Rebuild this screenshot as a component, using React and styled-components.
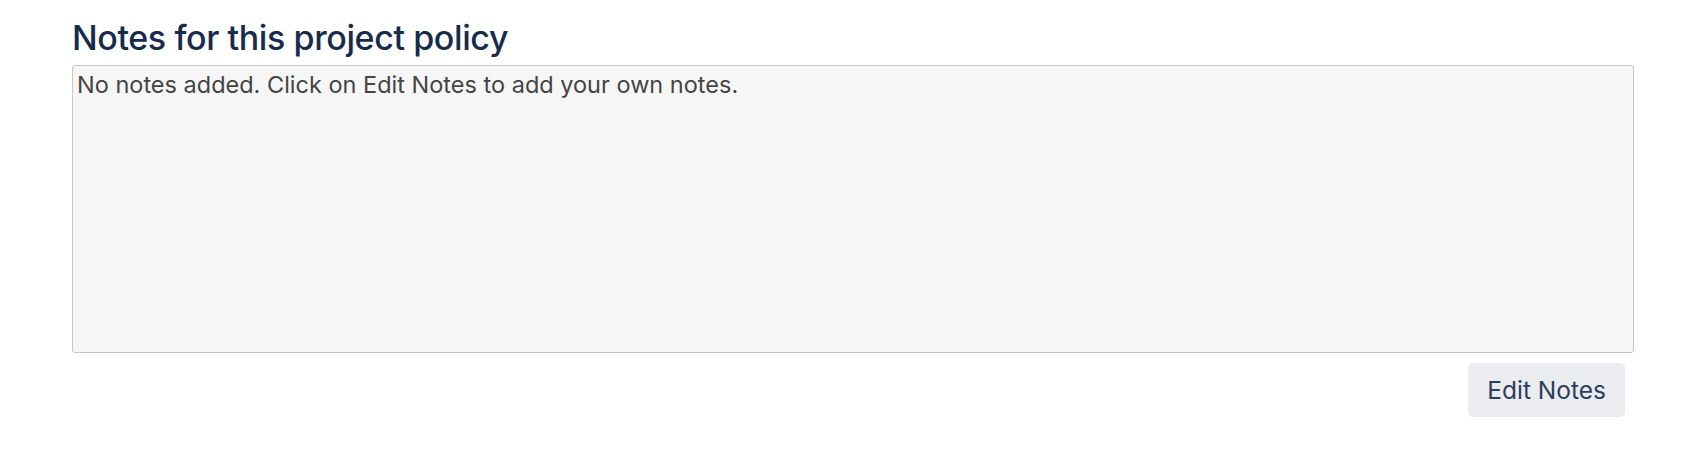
import React from 'react';
import styled, {createGlobalStyle} from 'styled-components';

const GlobalStyle = createGlobalStyle`
  body {
    margin: 0;
    background: #ffffff;
    font-family: Inter, "Noto Sans", "Liberation Sans", sans-serif;
  }
`;

const Section = styled.section`
  display: flex;
  flex-direction: column;
  padding: 16px 72px 0 72px;
`;

const Title = styled.h2`
  margin: 0 0 5px 0;
  font-size: 34px;
  line-height: 44px;
  font-weight: 500;
  letter-spacing: -0.4px;
  color: #172b4d;
`;

const NotesBox = styled.div`
  box-sizing: border-box;
  height: 288px;
  padding: 4px 4px;
  background: #f6f6f6;
  border: 1px solid #c8c8c8;
  border-radius: 3px;
  font-size: 23.5px;
  line-height: 30px;
  color: #444444;
`;

const Actions = styled.div`
  display: flex;
  justify-content: flex-end;
  padding: 10px 9px 0 0;
`;

const Button = styled.button`
  height: 54px;
  padding: 0 19px;
  border: none;
  border-radius: 5px;
  background: #ebecf0;
  color: #2c3e5d;
  font-family: inherit;
  font-size: 24.5px;
  cursor: pointer;
`;

const App = () => {
    return (
        <>
            <GlobalStyle/>
            <Section>
                <Title>Notes for this project policy</Title>
                <NotesBox>No notes added. Click on Edit Notes to add your own notes.</NotesBox>
                <Actions>
                    <Button>Edit Notes</Button>
                </Actions>
            </Section>
        </>
    );
};

export default App;
